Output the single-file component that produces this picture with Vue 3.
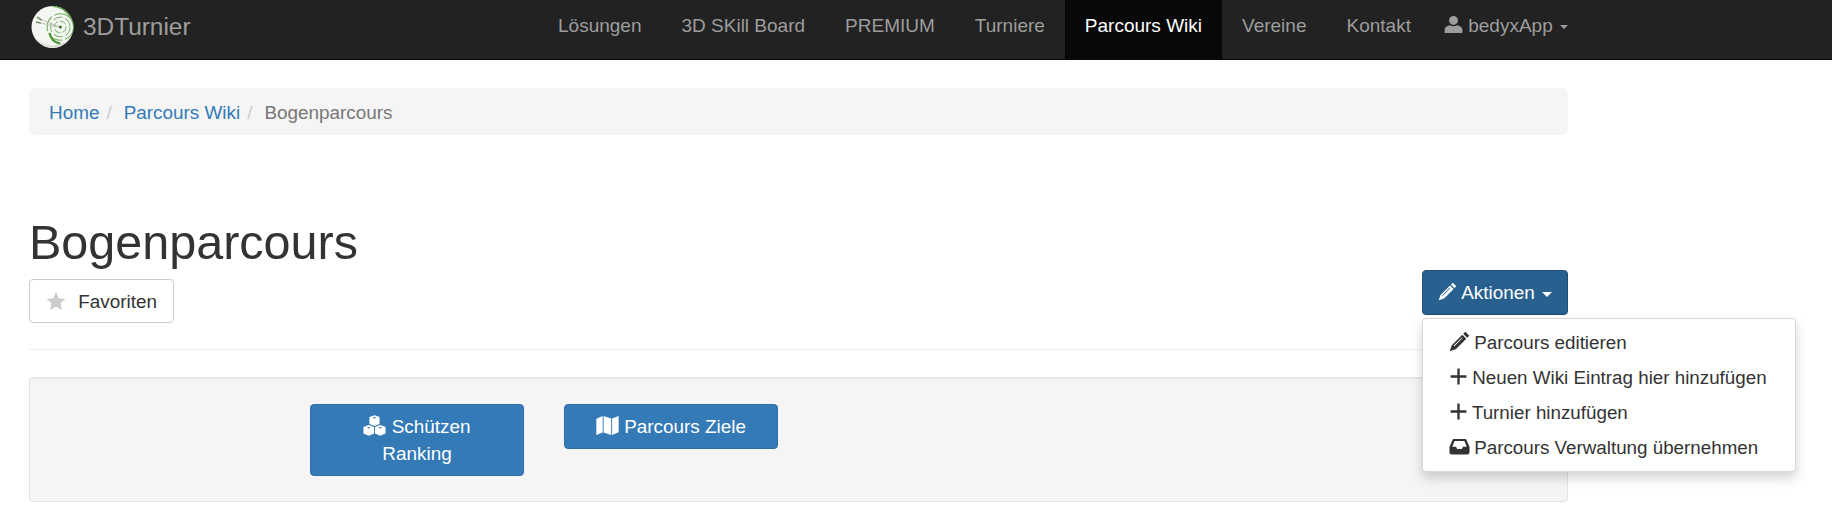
<script setup>
const navItems = [
  { label: 'Lösungen' },
  { label: '3D SKill Board' },
  { label: 'PREMIUM' },
  { label: 'Turniere' },
  { label: 'Parcours Wiki', active: true },
  { label: 'Vereine' },
  { label: 'Kontakt' }
]

const pencil = 'M14 .6 17.4 4 15.6 5.8 12.2 2.4ZM11.4 3.2 14.8 6.6 5.8 15.6.6 17.4 2.4 12.2ZM3.9 12.7 4.4 13.2 11.6 6 11.1 5.5Z'
const plus = 'M7.9 1.5H10.1V7.9H16.5V10.1H10.1V16.5H7.9V10.1H1.5V7.9H7.9Z'
const inbox = 'M4.5 2.5H13.5C14.3 2.5 14.8 2.9 15.1 3.6L17.6 9.5V14C17.6 15 16.8 15.8 15.8 15.8H2.2C1.2 15.8 .4 15 .4 14V9.5L2.9 3.6C3.2 2.9 3.7 2.5 4.5 2.5ZM4.8 4.3 2.8 9.2H6L7 11.2H11L12 9.2H15.2L13.2 4.3Z'

const menuItems = [
  { label: 'Parcours editieren', icon: pencil, wide: true },
  { label: 'Neuen Wiki Eintrag hier hinzufügen', icon: plus },
  { label: 'Turnier hinzufügen', icon: plus },
  { label: 'Parcours Verwaltung übernehmen', icon: inbox, wide: true }
]
</script>

<template>
  <div class="page">
    <nav class="navbar">
      <a class="brand">
        <svg class="logo" viewBox="0 0 44 44">
          <circle cx="22" cy="22" r="21.5" fill="#f4f6f1" />
          <path d="M4 33A21.5 21.5 0 0 0 40 33 24 24 0 0 1 4 33Z" fill="#d5dbd0" />
          <circle cx="30" cy="22" r="13.5" fill="none" stroke="#4c9a35" stroke-width="1.1" stroke-dasharray="16 3" opacity=".8" />
          <circle cx="30" cy="22" r="10" fill="none" stroke="#4c9a35" stroke-width="1" stroke-dasharray="10 3" opacity=".8" />
          <circle cx="30" cy="22" r="6" fill="none" stroke="#5a9e48" stroke-width="1" stroke-dasharray="7 2" opacity=".8" />
          <circle cx="30" cy="22" r="1.6" fill="#3a6d2c" />
          <path d="M19 28C20 34 24 38 30 39" fill="none" stroke="#4c9a35" stroke-width="2.4" />
          <path d="M7 13 29 22M6 17 28 22" stroke="#b9c2b4" stroke-width="1" />
          <path d="M6 12 11 15M5 17 10 18" stroke="#6b8f5f" stroke-width="1.5" />
          <path d="M22 1A21 21 0 0 1 41 14" fill="none" stroke="#6aa653" stroke-width="1.3" />
        </svg>
        <span>3DTurnier</span>
      </a>
      <ul class="nav">
        <li v-for="item in navItems" :key="item.label" :class="{ active: item.active }">{{ item.label }}</li>
        <li class="user">
          <svg class="user-icon" viewBox="0 0 18 18">
            <circle cx="9" cy="5.2" r="4.2" fill="currentColor" />
            <path d="M.6 17V13.6C.6 11.4 3.2 10 5.6 9.6 7.6 11 10.4 11 12.4 9.6 14.8 10 17.4 11.4 17.4 13.6V17Z" fill="currentColor" />
          </svg>
          bedyxApp <span class="caret"></span>
        </li>
      </ul>
    </nav>

    <main class="content">
      <ol class="breadcrumb">
        <li><a>Home</a></li>
        <li><a>Parcours Wiki</a></li>
        <li class="current">Bogenparcours</li>
      </ol>

      <header class="page-header">
        <div class="title-col">
          <h1>Bogenparcours</h1>
          <button class="btn btn-default">
            <svg class="star" viewBox="0 0 20 20">
              <path d="M10 1 12.8 7.2 19.5 7.9 14.5 12.3 15.9 19 10 15.6 4.1 19 5.5 12.3 .5 7.9 7.2 7.2Z" fill="currentColor" />
            </svg>
            Favoriten
          </button>
        </div>
        <div class="actions">
          <button class="btn btn-action">
            <svg class="icon" viewBox="0 0 18 18"><path :d="pencil" fill="currentColor" fill-rule="evenodd" /></svg>
            Aktionen <span class="caret"></span>
          </button>
          <ul class="dropdown">
            <li v-for="item in menuItems" :key="item.label">
              <svg class="icon" :class="{ 'icon-wide': item.wide }" viewBox="0 0 18 18">
                <path :d="item.icon" fill="currentColor" fill-rule="evenodd" />
              </svg>
              {{ item.label }}
            </li>
          </ul>
        </div>
      </header>

      <section class="well">
        <button class="btn btn-primary">
          <svg class="icon-lg" viewBox="0 0 20 18">
            <path fill="currentColor" fill-rule="evenodd" d="M10 0 14.4 1.7V7.6L10 9.4 5.6 7.6V1.7ZM8.2 2.3 10 3 11.8 2.3 10 1.6ZM5 8.6 9.6 10.3V15.9L5 18 .4 15.9V10.3ZM3.2 10.9 5 11.6 6.8 10.9 5 10.2ZM15 8.6 19.6 10.3V15.9L15 18 10.4 15.9V10.3ZM13.2 10.9 15 11.6 16.8 10.9 15 10.2Z" />
          </svg>
          Schützen<br />Ranking
        </button>
        <button class="btn btn-primary">
          <svg class="icon-lg" viewBox="0 0 20 18">
            <path fill="currentColor" d="M.3 3.2 5.8 .8V15L.3 17.2ZM6.6 .8 13.2 3V17.2L6.6 15ZM14 3 19.7 .8V14.9L14 17.2Z" />
          </svg>
          Parcours Ziele
        </button>
      </section>
    </main>
  </div>
</template>

<style>
body {
  margin: 0;
  background: #fff;
}
</style>

<style scoped>
.page {
  font-family: "Liberation Sans", Arial, sans-serif;
  font-size: 18.9px;
  line-height: 27px;
  color: #333;
}

.navbar {
  display: flex;
  align-items: stretch;
  height: 59px;
  padding: 0 264px 0 31px;
  background: #222;
  border-bottom: 1px solid #080808;
  color: #9d9d9d;
}

.brand {
  display: flex;
  align-items: center;
  gap: 9px;
  font-size: 24.4px;
}

.logo {
  width: 43px;
  height: 44px;
  margin-top: -5px;
}

.brand span {
  margin-top: -7px;
}

.nav {
  display: flex;
  margin: 0 0 0 auto;
  padding: 0;
  font-size: 19px;
  list-style: none;
}

.nav li {
  padding: 12px 20px 20px;
}

.nav li.active {
  background: #080808;
  color: #fff;
}

.nav li.user {
  padding-left: 13px;
  padding-right: 0;
}

.user-icon {
  width: 19px;
  height: 19px;
  vertical-align: -2px;
}

.caret {
  display: inline-block;
  width: 0;
  height: 0;
  margin-left: 2px;
  vertical-align: middle;
  border-top: 4px solid;
  border-right: 4px solid transparent;
  border-left: 4px solid transparent;
}

.btn-action .caret {
  border-top-width: 5px;
  border-right-width: 5px;
  border-left-width: 5px;
}

.content {
  padding: 28px 264px 0 29px;
}

.breadcrumb {
  display: flex;
  margin: 0;
  padding: 11px 20px 9px;
  background: #f5f5f5;
  border-radius: 6px;
  list-style: none;
}

.breadcrumb a {
  color: #337ab7;
}

.breadcrumb li + li::before {
  content: "/";
  padding: 0 12px 0 7px;
  color: #ccc;
}

.breadcrumb .current {
  color: #777;
}

.page-header {
  display: flex;
  justify-content: space-between;
  align-items: flex-start;
  margin-top: 80px;
  padding-bottom: 26px;
  border-bottom: 1px solid #eee;
}

.title-col h1 {
  margin: 0;
  font-size: 48.5px;
  font-weight: 400;
  line-height: 53px;
  padding: 1px 0 10px;
}

.btn {
  display: block;
  padding: 8px 12px;
  font: inherit;
  border: 1px solid transparent;
  border-radius: 4px;
  text-align: center;
}

.btn-default {
  padding: 8px 16px 7px;
  background: #fff;
  border-color: #ccc;
  color: #333;
}

.star {
  width: 20px;
  height: 20px;
  margin-right: 7px;
  color: #ccc;
  vertical-align: -3px;
}

.actions {
  position: relative;
  margin-top: 55px;
}

.btn-action {
  width: 146px;
  padding: 8px 0;
  background: #286090;
  border-color: #204d74;
  color: #fff;
  white-space: nowrap;
}

.icon {
  width: 19px;
  height: 19px;
  vertical-align: -2px;
}

.icon-lg {
  width: 23px;
  height: 21px;
  vertical-align: -3px;
}

.dropdown {
  position: absolute;
  top: 48px;
  left: 0;
  width: 374px;
  box-sizing: border-box;
  margin: 0;
  padding: 6px 0;
  background: #fff;
  border: 1px solid rgba(0, 0, 0, 0.15);
  border-radius: 4px;
  box-shadow: 0 6px 12px rgba(0, 0, 0, 0.175);
  list-style: none;
  white-space: nowrap;
}

.dropdown li {
  padding: 4px 26px;
  font-size: 18.8px;
}

.dropdown .icon {
  margin-right: -1px;
}

.icon-wide {
  width: 21px;
  height: 21px;
  vertical-align: -3px;
}

.well {
  display: flex;
  align-items: flex-start;
  gap: 40px;
  margin-top: 27px;
  padding: 26px 19px 25px 280px;
  background: #f5f5f5;
  border: 1px solid #e3e3e3;
  border-radius: 4px;
  box-shadow: inset 0 1px 1px rgba(0, 0, 0, 0.05);
}

.btn-primary {
  width: 214px;
  background: #337ab7;
  border-color: #2e6da4;
  color: #fff;
}
</style>
